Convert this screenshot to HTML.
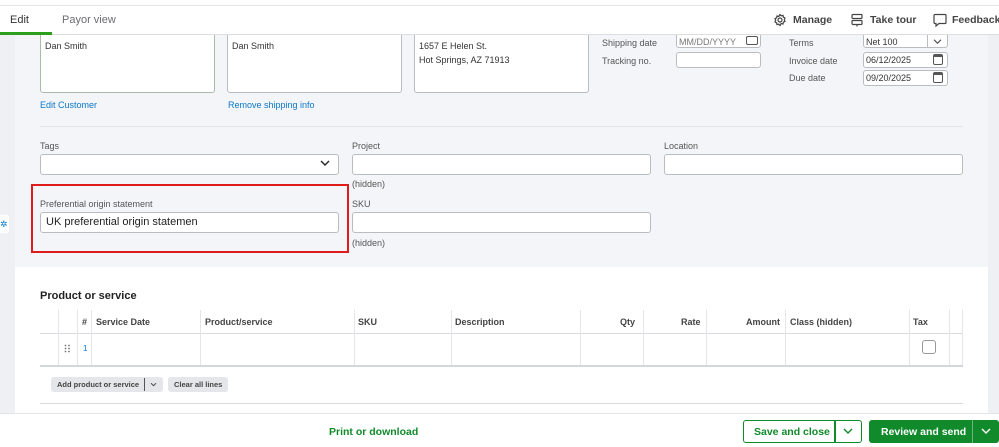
<!DOCTYPE html>
<html><head><style>
*{box-sizing:border-box;margin:0;padding:0}
body{width:999px;height:447px;overflow:hidden;position:relative;background:#fff;font-family:"Liberation Sans",Arial,sans-serif;font-size:10px;color:#333}
.a{position:absolute}
.box{position:absolute;background:#fff;border:1px solid #b9bcc0;border-radius:3px}
.lbl{position:absolute;font-size:9px;color:#555}
.lnk{position:absolute;font-size:9px;color:#0a77c9}
.th{position:absolute;top:317px;font-size:9px;font-weight:bold;color:#444}
.vl{position:absolute;top:310px;height:55px;width:1px;background:#e3e5e8}
.cal{position:absolute;width:10px;height:10px;border:1.3px solid #555;border-radius:2px;border-top-width:3px}
</style></head><body>
<div class="a" style="left:0;top:35px;width:15px;height:378px;background:#eef0f3"></div>
<div class="a" style="left:988px;top:35px;width:11px;height:378px;background:#eef0f3"></div>
<div class="a" style="left:15px;top:35px;width:973px;height:232px;background:#f4f5f8"></div>

<div class="box" style="left:40px;top:25px;width:175px;height:68px;border-color:#a8bda8"></div>
<div class="a" style="left:45px;top:41px;font-size:9px">Dan Smith</div>
<div class="box" style="left:227px;top:25px;width:175px;height:68px"></div>
<div class="a" style="left:232px;top:41px;font-size:9px">Dan Smith</div>
<div class="box" style="left:414px;top:25px;width:175px;height:68px"></div>
<div class="a" style="left:419px;top:39px;font-size:9px;line-height:14px">1657 E Helen St.<br>Hot Springs, AZ 71913</div>
<div class="lnk" style="left:40px;top:100px">Edit Customer</div>
<div class="lnk" style="left:228px;top:100px">Remove shipping info</div>

<div class="lbl" style="left:602px;top:38px">Shipping date</div>
<div class="lbl" style="left:602px;top:56px">Tracking no.</div>
<div class="box" style="left:676px;top:28px;width:85px;height:20px"></div>
<div class="a" style="left:679px;top:37px;font-size:9px;color:#777">MM/DD/YYYY</div>
<div class="cal" style="left:746px;top:36px;width:12px;height:9px;border-top-width:1.3px"></div>
<div class="box" style="left:676px;top:52px;width:85px;height:16px"></div>
<div class="lbl" style="left:789px;top:38px">Terms</div>
<div class="lbl" style="left:789px;top:56px">Invoice date</div>
<div class="lbl" style="left:789px;top:73px">Due date</div>
<div class="box" style="left:863px;top:28px;width:85px;height:20px"></div>
<div class="a" style="left:866px;top:37px;font-size:9px">Net 100</div>
<div class="a" style="left:927px;top:34px;width:1px;height:14px;background:#b9bcc0"></div>
<svg class="a" style="left:933px;top:38px" width="9" height="7" viewBox="0 0 10 8" fill="none" stroke="#444" stroke-width="1.3"><path d="M1 2l4 4 4-4"/></svg>
<div class="box" style="left:863px;top:52px;width:85px;height:16px"></div>
<div class="a" style="left:866px;top:55px;font-size:9px">06/12/2025</div>
<div class="cal" style="left:933px;top:54px;height:11px"></div>
<div class="box" style="left:863px;top:70px;width:85px;height:16px"></div>
<div class="a" style="left:866px;top:73px;font-size:9px">09/20/2025</div>
<div class="cal" style="left:933px;top:72px;height:11px"></div>

<div class="a" style="left:0;top:0;width:999px;height:35px;background:#fff;border-bottom:1px solid #dcdde0"></div>
<div class="a" style="left:0;top:5px;width:999px;height:1px;background:#e4e5e7"></div>
<div class="a" style="left:10px;top:14px;font-size:11px;color:#333">Edit</div>
<div class="a" style="left:0;top:32px;width:52px;height:3px;background:#2ca01c"></div>
<div class="a" style="left:62px;top:14px;font-size:11px;color:#6b6c72">Payor view</div>
<svg class="a" style="left:773px;top:13px" width="14" height="14" viewBox="0 0 14 14" fill="none" stroke="#444" stroke-width="1.2"><circle cx="7" cy="7" r="2"/><path d="M7 1.5l1.2 1.3 1.8-.4.4 1.8 1.6.8-.7 1.7.7 1.7-1.6.8-.4 1.8-1.8-.4L7 12.5l-1.2-1.3-1.8.4-.4-1.8-1.6-.8.7-1.7-.7-1.7 1.6-.8.4-1.8 1.8.4z"/></svg>
<div class="a" style="left:793px;top:14px;font-size:10.5px;font-weight:bold;color:#444">Manage</div>
<svg class="a" style="left:851px;top:13px" width="12" height="14" viewBox="0 0 12 14" fill="none" stroke="#444" stroke-width="1.2"><rect x="1" y="1.5" width="10" height="4" rx="1"/><rect x="1" y="7.5" width="10" height="4" rx="1"/><path d="M6 11.5v2"/></svg>
<div class="a" style="left:870px;top:14px;font-size:10.5px;font-weight:bold;color:#444">Take tour</div>
<svg class="a" style="left:933px;top:13px" width="14" height="14" viewBox="0 0 14 14" fill="none" stroke="#444" stroke-width="1.2"><path d="M2 1.5h10a1 1 0 0 1 1 1v7a1 1 0 0 1-1 1H6l-3 2.5v-2.5H2a1 1 0 0 1-1-1v-7a1 1 0 0 1 1-1z"/><path d="M4.5 6h.1M7 6h.1M9.5 6h.1"/></svg>
<div class="a" style="left:952px;top:14px;font-size:10.5px;font-weight:bold;color:#444;white-space:nowrap">Feedback</div>

<div class="a" style="left:40px;top:126px;width:923px;height:1px;background:#e2e4e7"></div>

<div class="lbl" style="left:40px;top:141px">Tags</div>
<div class="box" style="left:40px;top:154px;width:299px;height:21px"></div>
<svg class="a" style="left:320px;top:159px" width="10" height="8" viewBox="0 0 10 8" fill="none" stroke="#222" stroke-width="1.4"><path d="M1 2l4 4 4-4"/></svg>
<div class="lbl" style="left:352px;top:141px">Project</div>
<div class="box" style="left:352px;top:154px;width:299px;height:21px"></div>
<div class="lbl" style="left:352px;top:179px">(hidden)</div>
<div class="lbl" style="left:664px;top:141px">Location</div>
<div class="box" style="left:664px;top:154px;width:299px;height:21px"></div>

<div class="a" style="left:31px;top:184px;width:318px;height:69px;border:2px solid #e01b1b"></div>
<div class="lbl" style="left:40px;top:199px">Preferential origin statement</div>
<div class="box" style="left:40px;top:212px;width:299px;height:21px"></div>
<div class="a" style="left:46px;top:216px;font-size:11px;color:#222">UK preferential origin statemen</div>
<div class="lbl" style="left:352px;top:199px">SKU</div>
<div class="box" style="left:352px;top:212px;width:299px;height:21px"></div>
<div class="lbl" style="left:352px;top:238px">(hidden)</div>
<div class="a" style="left:0;top:215px;width:9px;height:18px;background:#fff;border-radius:0 3px 3px 0;color:#0a77c9;font-size:9px;line-height:18px">✲</div>

<div class="a" style="left:40px;top:290px;font-size:11px;font-weight:bold;color:#222">Product or service</div>
<div class="a" style="left:40px;top:333px;width:923px;height:1px;background:#d8dadd"></div>
<div class="a" style="left:40px;top:365px;width:923px;height:2px;background:#d3d6da"></div>
<div class="vl" style="left:58px"></div><div class="vl" style="left:77px"></div><div class="vl" style="left:91px"></div><div class="vl" style="left:200px"></div><div class="vl" style="left:354px"></div><div class="vl" style="left:451px"></div><div class="vl" style="left:580px"></div><div class="vl" style="left:643px"></div><div class="vl" style="left:706px"></div><div class="vl" style="left:785px"></div><div class="vl" style="left:909px"></div><div class="vl" style="left:949px"></div><div class="vl" style="left:962px"></div>
<div class="th" style="left:82px">#</div>
<div class="th" style="left:96px">Service Date</div>
<div class="th" style="left:205px">Product/service</div>
<div class="th" style="left:358px">SKU</div>
<div class="th" style="left:455px">Description</div>
<div class="th" style="left:620px">Qty</div>
<div class="th" style="left:681px">Rate</div>
<div class="th" style="left:746px">Amount</div>
<div class="th" style="left:790px">Class (hidden)</div>
<div class="th" style="left:913px">Tax</div>
<svg class="a" style="left:64px;top:344px" width="7" height="9" fill="#777"><circle cx="1.5" cy="1.5" r=".9"/><circle cx="5" cy="1.5" r=".9"/><circle cx="1.5" cy="4.5" r=".9"/><circle cx="5" cy="4.5" r=".9"/><circle cx="1.5" cy="7.5" r=".9"/><circle cx="5" cy="7.5" r=".9"/></svg>
<div class="a" style="left:83px;top:344px;font-size:8px;color:#0a77c9">1</div>
<div class="a" style="left:922px;top:340px;width:14px;height:14px;border:1px solid #999;border-radius:3px;background:#fff"></div>

<div class="a" style="left:51px;top:377px;width:112px;height:15px;background:#e4e6e9;border-radius:3px"></div>
<div class="a" style="left:57px;top:380px;font-size:7.5px;font-weight:bold;color:#444;white-space:nowrap">Add product or service</div>
<div class="a" style="left:144px;top:378px;width:1px;height:13px;background:#555"></div>
<svg class="a" style="left:150px;top:382px" width="7" height="5" viewBox="0 0 10 8" fill="none" stroke="#444" stroke-width="1.5"><path d="M1 2l4 4 4-4"/></svg>
<div class="a" style="left:168px;top:377px;width:60px;height:15px;background:#e4e6e9;border-radius:3px"></div>
<div class="a" style="left:174px;top:380px;font-size:7.5px;font-weight:bold;color:#444;white-space:nowrap">Clear all lines</div>
<div class="a" style="left:40px;top:403px;width:923px;height:1px;background:#d8dadd"></div>

<div class="a" style="left:0;top:413px;width:999px;height:34px;background:#fff;border-top:1px solid #e4e5e7"></div>
<div class="a" style="left:329px;top:426px;font-size:10.5px;font-weight:bold;color:#108a2a">Print or download</div>
<div class="a" style="left:743px;top:420px;width:119px;height:23px;border:1.5px solid #108a2a;border-radius:3px;background:#fff"></div>
<div class="a" style="left:754px;top:426px;font-size:10.5px;font-weight:bold;color:#108a2a">Save and close</div>
<div class="a" style="left:834px;top:421px;width:1.5px;height:21px;background:#108a2a"></div>
<svg class="a" style="left:843px;top:427px" width="10" height="8" viewBox="0 0 10 8" fill="none" stroke="#108a2a" stroke-width="1.4"><path d="M1 2l4 4 4-4"/></svg>
<div class="a" style="left:869px;top:420px;width:130px;height:23px;background:#108a2a;border-radius:3px"></div>
<div class="a" style="left:881px;top:426px;font-size:10.5px;font-weight:bold;color:#fff;white-space:nowrap">Review and send</div>
<div class="a" style="left:972px;top:420px;width:1px;height:23px;background:#6fb57f"></div>
<svg class="a" style="left:981px;top:427px" width="10" height="8" viewBox="0 0 10 8" fill="none" stroke="#fff" stroke-width="1.4"><path d="M1 2l4 4 4-4"/></svg>
</body></html>
